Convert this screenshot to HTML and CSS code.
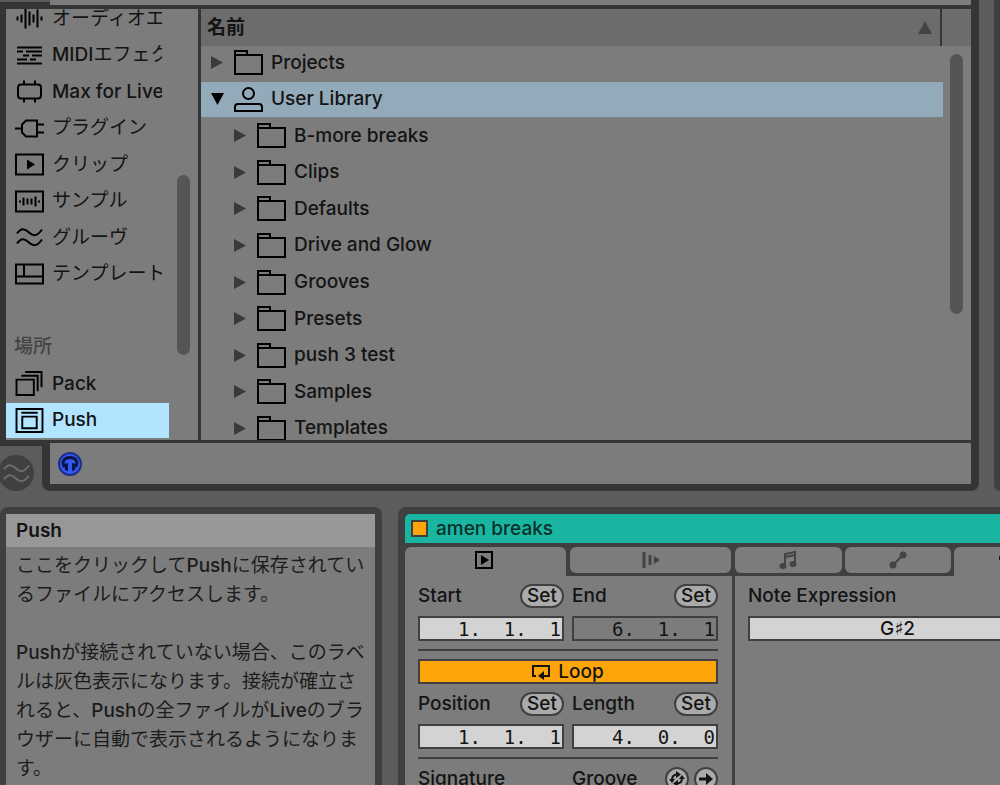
FILE: index.html
```html
<!DOCTYPE html>
<html lang="ja">
<head>
<meta charset="utf-8">
<meta name="viewport" content="width=device-width, initial-scale=1">
<title>Live Browser</title>
<link rel="stylesheet" href="styles.css">
</head>
<body>
<svg class="defs" aria-hidden="true">
  <symbol id="folder" viewBox="0 0 29 25"><path d="M1 5V1H13V5M1 5H28V24H1Z"/></symbol>
  <symbol id="closed" viewBox="0 0 13 13"><path class="solid" d="M0 0L12 6.500L0 13Z"/></symbol>
  <symbol id="waves" viewBox="0 0 29 24"><path d="M2 8C6 2 10 3 14 7S22 11 27 4M2 18C6 12 10 13 14 17S22 21 27 14"/></symbol>
</svg>

<section class="workspace">
  <div class="browser">
    <div class="search"><span class="search-tab"></span><span class="search-field"></span></div>
    <div class="browser-main">
      <nav class="sidebar">
        <div class="sidebar-list">
          <button class="item"><svg class="icon" viewBox="0 0 29 24"><path d="M2.500 10V14M6.500 8V16M10.500 2V22M14.500 5V19M18.500 8V16M22.500 3V21M26.500 10V14"/></svg><span>オーディオエフェクト</span></button>
          <button class="item"><svg class="icon" viewBox="0 0 29 24"><path d="M2 4H27M2 8H8M11 8H27M8 12H14M17 12H27M2 16H12M15 16H21M2 20H27"/></svg><span><b>MIDI</b>エフェクト</span></button>
          <button class="item"><svg class="icon" viewBox="0 0 29 24"><path d="M9 1V5M20 1V5M9 19V23M20 19V23"/><rect x="3" y="5" width="23" height="14" rx="3"/></svg><span><b>Max for Live</b></span></button>
          <button class="item"><svg class="icon" viewBox="0 0 29 24"><path d="M0 12H7M22 8H29M22 16H29M7 8L11 4H22V20H11L7 16Z"/></svg><span>プラグイン</span></button>
          <button class="item"><svg class="icon" viewBox="0 0 29 24"><path d="M1 2H28V22H1Z"/><path class="solid" d="M12 7L20 12L12 17Z"/></svg><span>クリップ</span></button>
          <button class="item"><svg class="icon" viewBox="0 0 29 24"><path d="M1 2H28V22H1ZM5 11V13M8.500 8V16M12.500 9V15M16.500 9V15M20.500 7V17M24 11V13"/></svg><span>サンプル</span></button>
          <button class="item"><svg class="icon"><use href="#waves"/></svg><span>グルーヴ</span></button>
          <button class="item"><svg class="icon" viewBox="0 0 29 24"><path d="M1 2H28V21H1ZM1 14H28M9 2V14"/></svg><span>テンプレート</span></button>
          <span class="spacer"></span>
          <h2 class="group">場所</h2>
          <button class="item"><svg class="icon" viewBox="0 0 29 26"><path d="M1 9H19V25H1ZM6 5H23V21M10 1H27V17"/></svg><span><b>Pack</b></span></button>
          <button class="item current"><svg class="icon" viewBox="0 0 29 26"><path d="M1 1H28V25H1ZM6 5H23M7 9H22V21H7Z"/></svg><span><b>Push</b></span></button>
        </div>
        <div class="track"><span class="thumb side-thumb"></span></div>
      </nav>
      <div class="files">
        <header class="columns"><button class="name">名前<svg class="sort" viewBox="0 0 14 13"><path class="solid" d="M0 13L7 0L14 13Z"/></svg></button></header>
        <div class="files-body">
          <div class="tree">
            <button class="row"><svg class="arrow"><use href="#closed"/></svg><svg class="icon"><use href="#folder"/></svg>Projects</button>
            <button class="row open"><svg class="arrow" viewBox="0 0 13 13"><path class="solid" d="M0 0H13L6.500 12Z"/></svg><svg class="icon" viewBox="0 0 29 25"><circle cx="14.500" cy="6.500" r="5.500"/><path d="M1 24V20Q1 17 4 17H25Q28 17 28 20V24Z"/></svg>User Library</button>
            <button class="row child"><svg class="arrow"><use href="#closed"/></svg><svg class="icon"><use href="#folder"/></svg>B-more breaks</button>
            <button class="row child"><svg class="arrow"><use href="#closed"/></svg><svg class="icon"><use href="#folder"/></svg>Clips</button>
            <button class="row child"><svg class="arrow"><use href="#closed"/></svg><svg class="icon"><use href="#folder"/></svg>Defaults</button>
            <button class="row child"><svg class="arrow"><use href="#closed"/></svg><svg class="icon"><use href="#folder"/></svg>Drive and Glow</button>
            <button class="row child"><svg class="arrow"><use href="#closed"/></svg><svg class="icon"><use href="#folder"/></svg>Grooves</button>
            <button class="row child"><svg class="arrow"><use href="#closed"/></svg><svg class="icon"><use href="#folder"/></svg>Presets</button>
            <button class="row child"><svg class="arrow"><use href="#closed"/></svg><svg class="icon"><use href="#folder"/></svg>push 3 test</button>
            <button class="row child"><svg class="arrow"><use href="#closed"/></svg><svg class="icon"><use href="#folder"/></svg>Samples</button>
            <button class="row child"><svg class="arrow"><use href="#closed"/></svg><svg class="icon"><use href="#folder"/></svg>Templates</button>
          </div>
          <div class="track"><span class="thumb file-thumb"></span></div>
        </div>
      </div>
    </div>
    <div class="browser-foot">
      <div class="notch"><button class="groove-pool" aria-label="Groove Pool"><svg class="icon"><use href="#waves"/></svg></button></div>
      <div class="status"><button class="preview" aria-label="Preview"><svg viewBox="0 0 24 24"><circle class="ring" cx="12" cy="12" r="11"/><path class="phones" d="M6.500 15C3 9 7 5.500 12 5.500S21 9 17.500 15"/><path class="cups" d="M6 12L10 11V19L7 18ZM18 12L14 11V19L17 18Z"/></svg></button></div>
    </div>
  </div>
  <div class="next-panel"></div>
</section>

<section class="details">
  <aside class="help">
    <h2 class="help-title">Push</h2>
    <div class="help-text">
      <p>ここをクリックして<b>Push</b>に保存されているファイルにアクセスします。</p>
      <p><b>Push</b>が接続されていない場合、このラベルは灰色表示になります。接続が確立されると、<b>Push</b>の全ファイルが<b>Live</b>のブラウザーに自動で表示されるようになります。</p>
    </div>
  </aside>

  <div class="clip">
    <header class="clip-title"><span class="swatch"></span>amen breaks</header>
    <div class="clip-body">
      <div class="pane main-pane">
        <div class="tabs">
          <button class="tab active" aria-label="Clip"><svg viewBox="0 0 18 18"><path d="M1 1H17V17H1Z"/><path class="solid" d="M6 4L14 9L6 14Z"/></svg></button>
          <div class="well after-active"><button class="tab" aria-label="Launch"><svg viewBox="0 0 18 18"><path class="thick" d="M2 1V17M8 4V14"/><path class="solid" d="M12 5L18 9L12 13Z"/></svg></button></div>
        </div>
        <div class="controls">
          <div class="pair">
            <div class="caption"><label for="start">Start</label><button class="set">Set</button></div>
            <div class="caption"><label for="end">End</label><button class="set">Set</button></div>
          </div>
          <div class="pair">
            <input class="value" id="start" value="1.  1.  1">
            <input class="value off" id="end" value="6.  1.  1">
          </div>
          <hr>
          <button class="loop"><svg viewBox="0 0 18 16"><path d="M4 12H1V2H17V12H12"/><path class="solid" d="M6 12L12 7V16Z"/></svg>Loop</button>
          <div class="pair">
            <div class="caption"><label for="position">Position</label><button class="set">Set</button></div>
            <div class="caption"><label for="length">Length</label><button class="set">Set</button></div>
          </div>
          <div class="pair">
            <input class="value" id="position" value="1.  1.  1">
            <input class="value" id="length" value="4.  0.  0">
          </div>
          <hr>
          <div class="pair">
            <div class="caption"><span>Signature</span></div>
            <div class="caption"><span>Groove</span><span class="rounds">
              <button class="set round" aria-label="Hot swap"><svg viewBox="0 0 18 18"><path d="M4 10C4 6 6 4.500 9 4.500M14 8C14 12 12 13.500 9 13.500"/><path class="solid" d="M8 1L13 4.500L8 8ZM10 10L5 13.500L10 17ZM1 9H7L4 13ZM11 9H17L14 5Z"/></svg></button>
              <button class="set round" aria-label="Commit"><svg viewBox="0 0 18 18"><path class="thick" d="M2 9H12"/><path class="solid" d="M9 3L16 9L9 15Z"/></svg></button>
            </span></div>
          </div>
        </div>
      </div>
      <div class="pane note-pane">
        <div class="tabs">
          <div class="well"><button class="tab" aria-label="Notes"><svg viewBox="0 0 18 18"><path d="M6 15V3L16 1V13M6 6L16 4"/><ellipse class="solid" cx="4" cy="15" rx="3.500" ry="3"/><ellipse class="solid" cx="14" cy="13" rx="3.500" ry="3"/></svg></button></div>
          <div class="well before-active"><button class="tab" aria-label="Envelopes"><svg viewBox="0 0 18 18"><path d="M4 14L14 4"/><circle class="solid" cx="4" cy="14" r="3.500"/><circle class="solid" cx="14" cy="4" r="3.500"/></svg></button></div>
          <button class="tab active" aria-label="Note Expression"><svg viewBox="0 0 18 18"><circle class="solid" cx="3" cy="7" r="3"/><path d="M3 7L9 12L15 4"/></svg></button>
        </div>
        <div class="controls">
          <div class="caption"><label for="note">Note Expression</label></div>
          <input class="value note" id="note" value="G♯2">
        </div>
      </div>
    </div>
  </div>
</section>
</body>
</html>
```

FILE: styles.css
```css
:root {
  --bg: #5c5c5c;
  --panel: #7c7c7c;
  --edge: #353535;
  --frame: #404040;
  --text: #141414;
}

* { box-sizing: border-box; }

body {
  margin: 0;
  height: 100vh;
  display: flex;
  flex-direction: column;
  gap: 16px;
  overflow: hidden;
  background: var(--bg);
  color: var(--text);
  font: 500 19px/24px Inter, "Noto Sans CJK JP", sans-serif;
}

button, input {
  margin: 0;
  padding: 0;
  border: 0;
  background: none;
  color: inherit;
  font: inherit;
}

h2, p { margin: 0; font: inherit; }
b { font-weight: 500; }

svg { display: block; flex: none; fill: none; stroke: currentColor; stroke-width: 2; }
.solid { fill: currentColor; stroke: none; }
.thick { stroke-width: 3; }
.defs { position: absolute; width: 0; height: 0; }
.icon { width: 29px; height: 25px; color: #000; }

/* Browser */
.workspace { display: flex; gap: 15px; }
.browser { flex: 1; min-width: 0; }
.next-panel { width: 6px; background: var(--frame); border-bottom-left-radius: 6px; }

.search { display: flex; height: 5px; border-right: 8px solid var(--edge); }
.search-tab { width: 50px; margin-top: 2px; background: var(--edge); }
.search-field { flex: 1; background: var(--panel); }

.browser-main {
  display: flex;
  height: 438px;
  border: solid var(--edge);
  border-width: 4px 8px 3px 6px;
  background: var(--panel);
}

.sidebar {
  display: flex;
  align-items: flex-end;
  gap: 8px;
  width: 195px;
  padding-bottom: 2px;
  border-right: 3px solid var(--edge);
  overflow: hidden;
}
.sidebar-list {
  display: grid;
  grid-template-rows: repeat(12, 1fr);
  gap: 1px;
  width: 163px;
  height: 437px;
}
.item {
  display: flex;
  align-items: center;
  gap: 8px;
  min-width: 0;
  min-height: 0;
  padding: 0 7px 0 9px;
  text-align: left;
  white-space: nowrap;
  font-weight: 400;
}
.item span { flex: 1; overflow: hidden; }
.current { background: #b1e4ff; }
.group { padding: 5px 8px 0; color: #444; }

.track { display: flex; width: 13px; align-self: stretch; }
.thumb { width: 13px; border-radius: 7px; background: #555; }
.side-thumb { height: 180px; margin-top: 166px; }
.file-thumb { height: 260px; margin-top: 8px; }

.files { flex: 1; display: flex; flex-direction: column; min-width: 0; }
.columns { display: flex; height: 37px; padding-right: 29px; background: #6c6c6c; }
.name {
  flex: 1;
  display: flex;
  align-items: center;
  justify-content: space-between;
  padding: 0 8px 0 6px;
  border-right: 2px solid var(--edge);
  font-weight: 700;
}
.sort { width: 14px; height: 13px; color: #444; }

.files-body { flex: 1; display: flex; gap: 7px; min-height: 0; padding-right: 8px; overflow: hidden; }
.tree { flex: 1; display: grid; grid-template-rows: repeat(11, 1fr); gap: 1px; height: 401px; margin-top: -1px; }
.row { display: flex; align-items: center; gap: 8px; min-height: 0; padding-left: 10px; text-align: left; }
.child { padding-left: 33px; }
.arrow { width: 13px; height: 13px; margin-right: 2px; color: #3a3a3a; }
.open { background: #93aaba; }
.open .arrow { color: #000; }

.browser-foot { display: flex; height: 48px; }
.notch { width: 42px; border-top: 3px solid var(--edge); }
.groove-pool {
  display: grid;
  place-items: center;
  width: 36px;
  height: 36px;
  margin: 9px 0 0 -2px;
  border-radius: 50%;
  background: var(--frame);
}
.groove-pool .icon { color: #6c6c6c; }
.status {
  flex: 1;
  display: flex;
  align-items: center;
  padding-left: 8px;
  border: solid var(--edge);
  border-width: 0 8px 7px 8px;
  border-radius: 0 0 8px 8px;
  background: var(--panel);
}
.preview svg { width: 24px; height: 24px; }
.ring { fill: #3358f4; stroke: #1d2f85; }
.phones { stroke: #0b1545; stroke-width: 3; }
.cups { fill: #0b1545; stroke: none; }

/* Lower area */
.details { flex: 1; display: flex; gap: 16px; min-height: 0; }
.help {
  width: 382px;
  border: solid var(--frame);
  border-width: 7px 7px 0 6px;
  border-radius: 8px 8px 0 0;
  background: var(--panel);
}
.help-title { height: 33px; padding: 5px 10px; background: #979797; font-weight: 600; }
.help-text { padding: 4px 8px 0 10px; font-weight: 400; line-height: 29px; color: #1c1c1c; }
.help-text p + p { margin-top: 29px; }

.clip {
  flex: 1;
  display: flex;
  flex-direction: column;
  min-width: 0;
  padding: 7px 0 0 7px;
  border-top-left-radius: 8px;
  background: var(--frame);
  overflow: hidden;
}
.clip-title {
  flex: none;
  display: flex;
  align-items: center;
  gap: 8px;
  height: 29px;
  padding-left: 6px;
  border-top-left-radius: 5px;
  background: #19b5a1;
  color: #082f2a;
}
.swatch { width: 17px; height: 17px; border: 2px solid var(--frame); background: #ffa50a; }

.clip-body { flex: 1; display: flex; gap: 3px; min-height: 0; margin-top: 4px; }
.pane { display: flex; flex-direction: column; }
.main-pane { flex: none; width: 327px; }
.note-pane { flex: none; width: 326px; }
.tabs { flex: none; display: flex; height: 29px; }
.tab {
  flex: 1;
  display: grid;
  place-items: center;
  border-radius: 6px;
  background: var(--panel);
  color: #444;
}
.tab svg { width: 18px; height: 18px; }
.tab.active { border-radius: 6px 6px 0 0; color: #000; }
.main-pane .active { flex: none; width: 161px; padding-right: 3px; }
.tab.active svg { margin-top: -3px; }
.well { flex: 1; display: flex; padding: 0 1px 3px 0; }
.after-active { padding-left: 4px; }
.note-pane .well { padding-right: 3px; }

.controls {
  flex: 1;
  display: flex;
  flex-direction: column;
  gap: 8px;
  padding: 8px 14px 0 13px;
  background: var(--panel);
}
.pair { display: grid; grid-template-columns: 1fr 1fr; gap: 8px; }
.caption { display: flex; align-items: center; justify-content: space-between; height: 24px; }
.set {
  width: 44px;
  height: 24px;
  border: 2px solid var(--frame);
  border-radius: 12px;
  background: #aaa;
  line-height: 20px;
}
.rounds { display: flex; gap: 5px; }
.round { display: grid; place-items: center; width: 24px; }
.round svg { width: 18px; height: 18px; }
.value {
  width: 100%;
  min-width: 0;
  height: 25px;
  padding-right: 1px;
  border: 2px solid var(--frame);
  background: #d3d3d3;
  font: 19px/21px "DejaVu Sans Mono", monospace;
  text-align: right;
}
.off { background: var(--panel); }
.note { width: 300px; font: 500 19px/21px Inter, "DejaVu Sans", sans-serif; text-align: center; }
.loop {
  display: flex;
  align-items: center;
  justify-content: center;
  gap: 8px;
  height: 25px;
  border: 2px solid var(--frame);
  background: #ffa50a;
}
.loop svg { width: 18px; height: 16px; }
hr { width: 100%; height: 2px; margin: 0; border: 0; background: var(--frame); }
```
